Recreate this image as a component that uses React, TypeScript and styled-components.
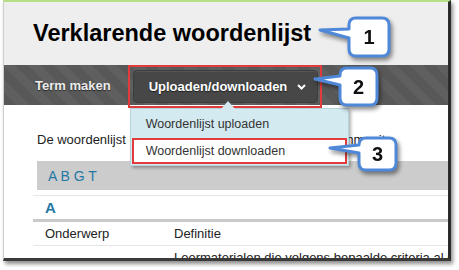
import React from 'react';
import styled, { createGlobalStyle } from 'styled-components';

const GlobalStyle = createGlobalStyle`
    html, body {
        margin: 0;
        padding: 0;
        background: #ffffff;
        font-family: "Liberation Sans", Arial, sans-serif;
    }
`;

const colors = {
    header: '#eeeeee',
    nav: '#585858',
    navStripe: '#5f5f5f',
    button: '#474747',
    red: '#e23b3b',
    menu: '#d3eaf1',
    teal: '#2479a4',
    callout: '#4f88d8',
};

const Page = styled.div`
    position: relative;
    width: 459px;
    height: 270px;
    overflow: hidden;
`;

const Frame = styled.div`
    box-sizing: border-box;
    margin-left: 3px;
    width: 448px;
    height: 261px;
    border-top: 2px solid #b5de86;
    border-left: 1px solid #cfcfcf;
    border-right: 3px solid #2b2b2b;
    border-bottom: 3px solid #3a3a3a;
    box-shadow: 2px 3px 4px rgba(0, 0, 0, 0.45);
    background: #ffffff;
    overflow: hidden;
    display: flex;
    flex-direction: column;
`;

const Header = styled.div`
    height: 63px;
    flex: none;
    display: flex;
    align-items: center;
    padding-left: 29px;
    background: ${colors.header};
`;

const Title = styled.h1`
    margin: 0;
    font-size: 23.5px;
    font-weight: bold;
    color: #000000;
`;

const Nav = styled.div`
    height: 40px;
    flex: none;
    box-sizing: border-box;
    display: flex;
    align-items: flex-start;
    gap: 22px;
    padding: 5px 0 0 31px;
    background: repeating-linear-gradient(45deg, ${colors.nav} 0 9px, ${colors.navStripe} 9px 18px);
`;

const NavLink = styled.span`
    line-height: 32px;
    font-size: 13px;
    font-weight: bold;
    color: #ececec;
    text-shadow: 0 1px 1px rgba(0, 0, 0, 0.6);
`;

const MenuAnchor = styled.div`
    position: relative;
`;

const NavButton = styled.div<{ $highlighted?: boolean }>`
    position: relative;
    box-sizing: border-box;
    height: 33px;
    display: flex;
    align-items: center;
    gap: 10px;
    padding: 0 11px 0 15px;
    border: 1px solid #3d3d3d;
    border-radius: 4px;
    background: ${colors.button};
    box-shadow: inset 0 1px 0 rgba(255, 255, 255, 0.08);
    font-size: 13px;
    font-weight: bold;
    color: #ffffff;
    text-shadow: 0 1px 1px rgba(0, 0, 0, 0.6);
    &::after {
        content: '';
        display: ${props => props.$highlighted ? 'block' : 'none'};
        position: absolute;
        inset: -6px -5px -6px -6px;
        border: 2px solid ${colors.red};
        pointer-events: none;
    }
`;

const Dropdown = styled.div`
    position: absolute;
    top: 38px;
    left: -3px;
    z-index: 5;
    box-sizing: border-box;
    width: 219px;
    padding: 1px;
    display: flex;
    flex-direction: column;
    gap: 1px;
    border: 1px solid #b9d3dc;
    background: ${colors.menu};
    box-shadow: 2px 2px 3px rgba(0, 0, 0, 0.3);
`;

const Caret = styled.span`
    position: absolute;
    top: -8px;
    left: 90px;
    width: 0;
    height: 0;
    border-left: 7px solid transparent;
    border-right: 7px solid transparent;
    border-bottom: 8px solid ${colors.menu};
`;

const MenuItem = styled.div<{ $highlighted?: boolean }>`
    height: ${props => props.$highlighted ? 26 : 27}px;
    display: flex;
    align-items: center;
    padding-left: 14px;
    font-size: 12.5px;
    color: #333333;
    background: ${props => props.$highlighted ? '#ffffff' : 'transparent'};
    box-shadow: ${props => props.$highlighted ? `inset 0 0 0 2px ${colors.red}` : 'none'};
`;

const Content = styled.div`
    padding: 27px 0 0 29px;
`;

const Intro = styled.p`
    margin: 0 0 0 4px;
    font-size: 13px;
    line-height: 16px;
    color: #222222;
    white-space: nowrap;
`;

const LetterBar = styled.div`
    margin: 13px 0 0 4px;
    height: 29px;
    display: flex;
    align-items: center;
    padding-left: 11px;
    background: #cccccc;
    font-size: 14px;
    color: ${colors.teal};
`;

const Rule = styled.div<{ $thick?: boolean; $gap?: number }>`
    margin-top: ${props => props.$gap || 0}px;
    height: ${props => props.$thick ? 3 : 1}px;
    background: ${props => props.$thick ? '#c9c9c9' : '#e6e6e6'};
`;

const LetterHeading = styled.div`
    height: 23px;
    line-height: 23px;
    padding-left: 12px;
    font-size: 15px;
    font-weight: bold;
    color: ${colors.teal};
`;

const TableRow = styled.div`
    display: grid;
    grid-template-columns: 141px 1fr;
    align-items: start;
    min-height: 23px;
    font-size: 13px;
    color: #222222;
    white-space: nowrap;
    overflow: hidden;
`;

const Cell = styled.div<{ $pad?: number; $first?: boolean }>`
    padding-top: ${props => props.$pad || 0}px;
    padding-left: ${props => props.$first ? 12 : 0}px;
    line-height: 23px;
`;

const CalloutSvg = styled.svg<{ $left: number; $top: number }>`
    position: absolute;
    left: ${props => props.$left}px;
    top: ${props => props.$top}px;
    overflow: visible;
    filter: drop-shadow(2px 3px 2px rgba(0, 0, 0, 0.45));
    z-index: 10;
`;

const CalloutLabel = styled.text`
    font-family: "Liberation Sans", Arial, sans-serif;
    font-size: 20px;
    font-weight: bold;
    fill: #111111;
`;

interface ICallout {
    box: [number, number, number, number];
    tip: [number, number];
    tail: [number, number];
    label: string;
}

const Callout = ({ box, tip, tail, label }: ICallout) => {
    const [x, y, w, h] = box;
    const ox = tip[0] - 2;
    const oy = y - 2;
    const bx = x - ox;
    const by = y - oy;
    const r = 7;
    const tx = tip[0] - ox;
    const ty = tip[1] - oy;
    const t1 = tail[0] - oy;
    const t2 = tail[1] - oy;
    const d = `M${bx + r},${by} H${bx + w - r} Q${bx + w},${by} ${bx + w},${by + r} V${by + h - r} Q${bx + w},${by + h} ${bx + w - r},${by + h} H${bx + r} Q${bx},${by + h} ${bx},${by + h - r} V${t2} L${tx},${ty} L${bx},${t1} V${by + r} Q${bx},${by} ${bx + r},${by} Z`;
    return (
        <CalloutSvg $left={ox} $top={oy} width={bx + w + 2} height={h + 4}>
            <path d={d} fill="#ffffff" stroke={colors.callout} strokeWidth={3} strokeLinejoin="round"/>
            <CalloutLabel x={bx + w / 2} y={by + h / 2 + 7} textAnchor="middle">{label}</CalloutLabel>
        </CalloutSvg>
    );
};

const Chevron = () => (
    <svg width="9" height="6" viewBox="0 0 9 6">
        <polyline points="1,1 4.5,4.5 8,1" fill="none" stroke="#ffffff" strokeWidth="2"/>
    </svg>
);

const App = () => {
    return (
        <Page>
            <GlobalStyle/>
            <Frame>
                <Header>
                    <Title>Verklarende woordenlijst</Title>
                </Header>
                <Nav>
                    <NavLink>Term maken</NavLink>
                    <MenuAnchor>
                        <NavButton $highlighted>
                            Uploaden/downloaden
                            <Chevron/>
                        </NavButton>
                        <Dropdown>
                            <Caret/>
                            <MenuItem>Woordenlijst uploaden</MenuItem>
                            <MenuItem $highlighted>Woordenlijst downloaden</MenuItem>
                        </Dropdown>
                    </MenuAnchor>
                </Nav>
                <Content>
                    <Intro>De woordenlijst bevat termen en definities voor de community.</Intro>
                    <LetterBar>A B G T</LetterBar>
                    <Rule $gap={5}/>
                    <LetterHeading>A</LetterHeading>
                    <Rule $thick/>
                    <TableRow>
                        <Cell $first>Onderwerp</Cell>
                        <Cell>Definitie</Cell>
                    </TableRow>
                    <Rule/>
                    <TableRow>
                        <Cell $first $pad={9}>Adaptief leren</Cell>
                        <Cell $pad={0}>Leermaterialen die volgens bepaalde criteria al door anderen zijn beoordeeld</Cell>
                    </TableRow>
                </Content>
            </Frame>
            <Callout box={[349, 18, 40, 38]} tip={[320, 30]} tail={[29, 38]} label="1"/>
            <Callout box={[340, 68, 37, 37]} tip={[315, 79]} tail={[76, 85]} label="2"/>
            <Callout box={[359, 138, 37, 32]} tip={[330, 148]} tail={[145, 153]} label="3"/>
        </Page>
    );
};

export default App;
